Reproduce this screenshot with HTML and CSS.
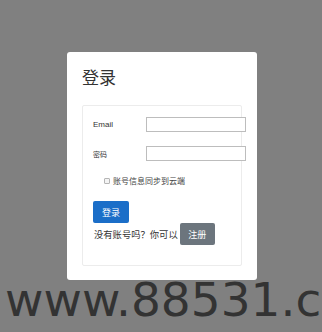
FILE: index.html
```html
<!DOCTYPE html>
<html lang="zh">
<head>
<meta charset="utf-8">
<link rel="stylesheet" href="styles.css">
</head>
<body>
<div class="page">
  <div class="card">
    <h1 class="title">登录</h1>
    <div class="panel">
      <div class="row">
        <label class="label">Email</label>
        <input class="input" type="text">
      </div>
      <div class="row">
        <label class="label label-cjk">密码</label>
        <input class="input" type="password">
      </div>
      <div class="check-row">
        <span class="checkbox"></span>
        <span class="check-text">账号信息同步到云端</span>
      </div>
      <button class="btn btn-primary">登录</button>
      <div class="reg-row">
        <span class="reg-text">没有账号吗？你可以</span>
        <button class="btn btn-secondary">注册</button>
      </div>
    </div>
  </div>
  <div class="watermark">www.88531.c</div>
</div>
</body>
</html>
```
FILE: styles.css
```css
html, body {
  margin: 0;
  padding: 0;
  background: #808080;
  width: 322px;
  height: 332px;
  overflow: hidden;
}
.page {
  display: flex;
  flex-direction: column;
  font-family: "Noto Sans CJK SC", "Liberation Sans", sans-serif;
  color: #333;
}
.card {
  box-sizing: border-box;
  width: 190px;
  margin: 52px 0 0 67px;
  height: 228px;
  background: #fff;
  border-radius: 3px;
  padding: 13px 15px 14px 15px;
}
.title {
  margin: 0;
  font-size: 17px;
  font-weight: normal;
  line-height: 24px;
  height: 40px;
  color: #333;
}
.panel {
  box-sizing: border-box;
  width: 160px;
  height: 161px;
  border: 1px solid #ececec;
  border-radius: 2px;
  padding: 11px 0 0 10px;
}
.row {
  display: flex;
  align-items: center;
  height: 15px;
  margin-bottom: 14px;
}
.label {
  width: 53px;
  flex: none;
  font-family: "Liberation Sans", "Noto Sans CJK SC", sans-serif;
  font-size: 8px;
  color: #333;
}
.label-cjk {
  font-family: "Noto Sans CJK SC", sans-serif;
  font-size: 7px;
}
.input {
  box-sizing: border-box;
  width: 100px;
  height: 15px;
  margin: 0;
  padding: 0;
  border: 1px solid #bdbdbd;
  background: #fff;
  flex: none;
}
.check-row {
  display: flex;
  align-items: center;
  margin: 0 0 0 11px;
  height: 12px;
}
.checkbox {
  box-sizing: border-box;
  width: 6px;
  height: 6px;
  border: 1px solid #b5b5b5;
  border-radius: 1px;
  background: #f4f4f4;
  margin-right: 3px;
}
.check-text {
  font-size: 8px;
  color: #444;
  line-height: 12px;
}
.btn {
  box-sizing: border-box;
  border: none;
  border-radius: 2px;
  color: #fff;
  font-family: "Noto Sans CJK SC", sans-serif;
  font-size: 9px;
  padding: 0;
  margin: 0;
  display: flex;
  align-items: center;
  justify-content: center;
}
.btn-primary {
  width: 36px;
  height: 22px;
  background: #1b6ec8;
  margin-top: 14px;
  margin-left: 0;
}
.reg-row {
  display: flex;
  align-items: center;
  height: 22px;
  margin-left: 1px;
  margin-top: 0;
}
.reg-text {
  font-size: 9.3px;
  color: #333;
  margin-right: 2px;
}
.btn-secondary {
  width: 35px;
  height: 22px;
  background: #6c757d;
}
.watermark {
  font-family: "DejaVu Sans", sans-serif;
  font-size: 47px;
  line-height: 46px;
  color: #333;
  white-space: nowrap;
  margin: -3px 0 0 5px;
}
```
